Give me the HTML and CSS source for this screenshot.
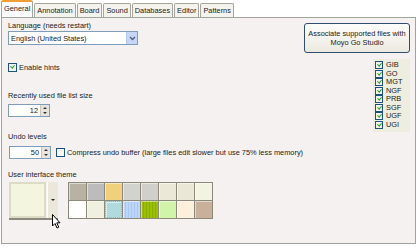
FILE: index.html
```html
<!DOCTYPE html>
<html lang="en">

<head>
    <meta charset="UTF-8">
    <title>Options</title>
    <link rel="stylesheet" href="styles.css">
</head>

<body>
    <div class="tabs">
        <div class="tab active">General</div>
        <div class="tab">Annotation</div>
        <div class="tab">Board</div>
        <div class="tab">Sound</div>
        <div class="tab">Databases</div>
        <div class="tab">Editor</div>
        <div class="tab">Patterns</div>
    </div>

    <div class="panel">
        <div class="top">
            <div class="left">
                <div class="label">Language (needs restart)</div>
                <div class="combo">
                    <span>English (United States)</span>
                    <span class="combo-btn">
                        <svg width="7" height="5" viewBox="0 0 7 5"><path d="M1 1 L3.5 3.5 L6 1" fill="none" stroke="#4d6185" stroke-width="1.4"/></svg>
                    </span>
                </div>
                <label class="check hints"><span class="box on"></span>Enable hints</label>
                <div class="label recent">Recently used file list size</div>
                <div class="spin">
                    <span class="spin-val">12</span>
                    <span class="spin-btns"><i class="up"></i><i class="down"></i></span>
                </div>
            </div>
            <div class="right">
                <button class="assoc">Associate supported files with<br>Moyo Go Studio</button>
                <div class="filelist">
                    <label class="check"><span class="box on"></span>GIB</label>
                    <label class="check"><span class="box on"></span>GO</label>
                    <label class="check"><span class="box on"></span>MGT</label>
                    <label class="check"><span class="box on"></span>NGF</label>
                    <label class="check"><span class="box on"></span>PRB</label>
                    <label class="check"><span class="box on"></span>SGF</label>
                    <label class="check"><span class="box on"></span>UGF</label>
                    <label class="check"><span class="box on"></span>UGI</label>
                </div>
            </div>
        </div>

        <div class="label">Undo levels</div>
        <div class="undo-row">
            <div class="spin">
                <span class="spin-val">50</span>
                <span class="spin-btns"><i class="up"></i><i class="down"></i></span>
            </div>
            <label class="check"><span class="box"></span>Compress undo buffer (large files edit slower but use 75% less memory)</label>
        </div>

        <div class="label theme-label">User interface theme</div>
        <div class="theme-row">
            <div class="theme-pick">
                <div class="theme-swatch"></div>
                <div class="theme-drop"><span class="arrow"></span></div>
            </div>
            <div class="palette">
                <span class="c1"></span><span class="c2"></span><span class="c3"></span><span class="c4"></span>
                <span class="c5"></span><span class="c6"></span><span class="c7"></span><span class="c8"></span>
                <span class="c9"></span><span class="c10"></span><span class="c11"></span><span class="c12"></span>
                <span class="c13"></span><span class="c14"></span><span class="c15"></span><span class="c16"></span>
            </div>
        </div>

        <svg class="cursor" width="10" height="16" viewBox="0 0 10 16">
            <path d="M0.5 0.5 L0.5 12 L3 9.5 L5 14 L6.8 13.2 L4.8 8.8 L8 8.8 Z" fill="#fff" stroke="#000" stroke-width="1"/>
        </svg>
    </div>
</body>

</html>
```

FILE: styles.css
```css
body {
    font-family: "Liberation Sans", Arial, sans-serif;
    font-size: 7.4px;
    color: #222;
    margin: 0;
    background-color: #fff;
}

.tabs {
    display: flex;
    align-items: flex-end;
    height: 17px;
    padding-left: 1px;
    gap: 1px;
}

.tab {
    height: 14px;
    line-height: 14px;
    padding: 0 2px;
    background-color: #f4f3ee;
    border: 1px solid #a7a69c;
    border-bottom: none;
    border-radius: 2px 2px 0 0;
    box-sizing: border-box;
}

.tab.active {
    height: 17px;
    background-color: #fcfcfe;
    border-top: 2px solid #f0a030;
    border-color: #f0a030 #a0a59c #fcfcfe #a0a59c;
}

.panel {
    position: relative;
    width: 415px;
    height: 227px;
    margin-left: 1px;
    padding: 3px 5px 0 6px;
    box-sizing: border-box;
    background-color: #f4f1f0;
    border: 1px solid #a0a59c;
}

.top {
    display: flex;
    justify-content: space-between;
}

.label {
    height: 9px;
    line-height: 9px;
}

.combo {
    display: flex;
    justify-content: space-between;
    align-items: center;
    width: 130px;
    height: 14px;
    margin-top: 1px;
    padding-left: 2px;
    box-sizing: border-box;
    background-color: #fff;
    border: 1px solid #7f9db9;
}

.combo-btn {
    display: flex;
    align-items: center;
    justify-content: center;
    width: 10px;
    height: 12px;
    background-color: #c6d6f8;
    border-left: 1px solid #b5c8ef;
}

.check {
    display: flex;
    align-items: center;
    gap: 2px;
    line-height: 8px;
}

.box {
    width: 6px;
    height: 6px;
    border: 1px solid #1c5180;
    background-color: #f2f2ee;
    flex: none;
    position: relative;
}

.box.on::after {
    content: "";
    position: absolute;
    left: 1.5px;
    top: 0;
    width: 1.6px;
    height: 3.2px;
    border: solid #21a121;
    border-width: 0 1.4px 1.4px 0;
    transform: rotate(40deg);
}

.hints {
    margin-top: 18px;
}

.hints .box {
    width: 7px;
    height: 7px;
}

.recent {
    margin-top: 19px;
}

.spin {
    display: flex;
    width: 42px;
    height: 13px;
    margin-top: 4px;
    box-sizing: border-box;
    background-color: #fff;
    border: 1px solid #7f9db9;
    flex: none;
}

.spin-val {
    flex: 1;
    text-align: right;
    line-height: 11px;
    padding-right: 2px;
}

.spin-btns {
    display: flex;
    flex-direction: column;
    width: 8px;
    background-color: #e6e4dc;
    border-left: 1px solid #c8c6bc;
}

.spin-btns i {
    flex: 1;
    display: flex;
    align-items: center;
    justify-content: center;
}

.spin-btns i::after {
    content: "";
    border-left: 2px solid transparent;
    border-right: 2px solid transparent;
}

.spin-btns .up::after {
    border-bottom: 2px solid #333;
}

.spin-btns .down::after {
    border-top: 2px solid #333;
}

.right {
    display: flex;
    flex-direction: column;
    align-items: flex-end;
    padding-top: 2px;
}

.assoc {
    width: 106px;
    height: 30px;
    padding: 0;
    font-family: inherit;
    font-size: 7.4px;
    line-height: 9px;
    color: #222;
    background: linear-gradient(#fdfdfb, #ece9e0);
    border: 1px solid #2f4d6e;
    border-radius: 3px;
}

.filelist {
    width: 37px;
    height: 73px;
    margin-top: 6px;
    padding: 2px 0 0 2px;
    box-sizing: border-box;
    background-color: #eeeee0;
}

.filelist .check {
    height: 8.5px;
    gap: 3px;
}

.undo-row {
    display: flex;
    align-items: center;
    gap: 5px;
    margin-top: 5px;
}

.undo-row .spin {
    margin-top: 0;
    margin-left: 1px;
}

.undo-row .box {
    width: 7px;
    height: 7px;
    border-color: #1c5180;
    background-color: #f6f6f2;
}

.theme-label {
    margin-top: 11px;
}

.theme-row {
    display: flex;
    align-items: flex-start;
    gap: 10px;
    margin-top: 3px;
    padding-left: 1px;
}

.theme-pick {
    display: flex;
    border-bottom: 2px solid #8c8a7c;
}

.theme-swatch {
    width: 37px;
    height: 36px;
    box-sizing: border-box;
    background-color: #f3f5de;
    border: 2px solid #dcdcc6;
}

.theme-drop {
    display: flex;
    align-items: center;
    justify-content: center;
    width: 10px;
    margin-left: 1px;
    background-color: #ebe8da;
    border-left: 1px solid #fff;
}

.arrow {
    border-left: 2px solid transparent;
    border-right: 2px solid transparent;
    border-top: 2px solid #222;
}

.palette {
    display: grid;
    grid-template-columns: repeat(8, 17px);
    grid-auto-rows: 17px;
    gap: 1px;
    padding: 1px;
    background-color: #8c887a;
}

.palette span {
    box-shadow: inset 1px 1px 0 rgba(255, 255, 255, 0.5);
}

.c1 { background-color: #b8b2a4; }
.c2 { background-color: #bcbcbc; }
.c3 { background-color: #f0d07c; }
.c4 { background-color: #d2d2ce; }
.c5 { background-color: #cfcfcb; }
.c6 { background-color: #ece8d8; }
.c7 { background-color: #ebe7d6; }
.c8 { background-color: #f3f3e2; }
.c9 { background-color: #ffffff; }
.c10 { background-color: #f0f0e0; }
.c11 { background-color: #b2dadc; border: 1px dotted #8cbcc4; }
.c12 { background: repeating-linear-gradient(90deg, #bcd6fa 0 2px, #aac8f2 2px 3px); }
.c13 { background: repeating-linear-gradient(90deg, #9cc000 0 2px, #88ac00 2px 3px); }
.c14 { background-color: #d2f4aa; }
.c15 { background-color: #fcf0dc; }
.c16 { background-color: #c8b09a; }

.cursor {
    position: absolute;
    left: 50px;
    top: 196px;
}
```
